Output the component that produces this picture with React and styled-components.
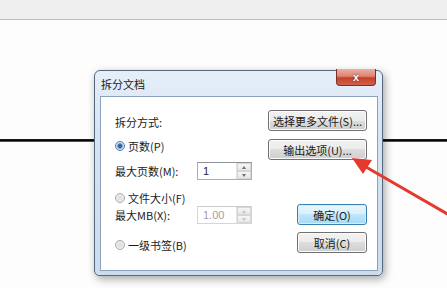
import React from "react";
import styled, { createGlobalStyle } from "styled-components";

const GlobalStyle = createGlobalStyle`
  html, body {
    margin: 0;
    padding: 0;
    background: #fff;
  }
  body {
    font-family: "Noto Sans CJK SC", "Liberation Sans", sans-serif;
  }
`;

const Page = styled.div`
  position: relative;
  width: 447px;
  height: 288px;
  overflow: hidden;
  background: #fdfdfd;
`;

const TopBar = styled.div`
  height: 19px;
  background: #efefef;
  border-bottom: 1px solid #bdbdbd;
`;

const Rule = styled.div`
  margin-top: 119px;
  height: 3px;
  background: linear-gradient(#2a2a2a, #000 45%, #111 65%, #8a8a8a);
`;

const Dialog = styled.div`
  position: absolute;
  left: 94px;
  top: 70px;
  width: 287px;
  height: 204px;
  border: 1px solid #56687c;
  border-radius: 6px 6px 5px 5px;
  background: linear-gradient(#e6eff9, #d6e4f3 30%, #cbdcef);
  box-shadow: 2px 3px 9px rgba(0, 0, 0, 0.35);
  display: flex;
  flex-direction: column;
  font-family: "Noto Sans CJK SC", "Liberation Sans", sans-serif;
  font-size: 11px;
  color: #1a1a1a;
`;

const TitleBar = styled.div`
  height: 25px;
  display: flex;
  justify-content: space-between;
  align-items: flex-start;
  padding: 0 6px 0 6px;
`;

const Title = styled.span`
  margin-top: 5px;
  color: #222;
`;

const CloseButton = styled.div`
  margin-top: -2px;
  width: 40px;
  height: 17px;
  box-sizing: border-box;
  border: 1px solid #7d2f25;
  border-top: none;
  border-radius: 0 0 4px 4px;
  background: linear-gradient(#eab0a4, #dd8470 45%, #c5412b 55%, #d0604a);
  display: flex;
  align-items: center;
  justify-content: center;
  color: #fff;
  font-family: "Liberation Sans", sans-serif;
  font-weight: bold;
  font-size: 11px;
  text-shadow: 0 0 2px #5a1a10;
`;

const Panel = styled.div`
  flex: 1;
  margin: 0 4px 4px 5px;
  border: 1px solid #8ba2bc;
  background: #fff;
  display: flex;
  justify-content: space-between;
  padding: 0 10px 0 14px;
`;

const LeftCol = styled.div`
  display: flex;
  flex-direction: column;
`;

const RightCol = styled.div`
  display: flex;
  flex-direction: column;
  align-items: flex-end;
  padding-top: 13px;
`;

const Row = styled.div`
  display: flex;
  align-items: center;
  height: ${(p) => p.$h || 16}px;
  margin-top: ${(p) => p.$mt || 0}px;
`;

const Label = styled.span`
  width: ${(p) => (p.$w ? p.$w + "px" : "auto")};
  white-space: nowrap;
`;

const RadioDot = styled.span`
  width: 10px;
  height: 10px;
  box-sizing: border-box;
  border-radius: 50%;
  margin-right: 3px;
  border: 1px solid ${(p) => (p.$on ? "#5a7fa5" : "#a9a9a9")};
  background: ${(p) =>
    p.$on
      ? "radial-gradient(circle, #1f4f86 0, #3f78ad 2px, #bcd3ea 3px, #e9f1f9 5px)"
      : "radial-gradient(circle, #dcdcdc 0, #e8e8e8 3px, #f7f7f7 5px)"};
`;

const Spin = styled.div`
  width: 55px;
  height: 18px;
  box-sizing: border-box;
  border: 1px solid ${(p) => (p.$disabled ? "#d3d6da" : "#abadb3")};
  border-top-color: ${(p) => (p.$disabled ? "#c8cbd0" : "#8e9196")};
  background: #fff;
  display: flex;
`;

const SpinValue = styled.span`
  flex: 1;
  padding-left: 5px;
  line-height: 16px;
  font-family: "Liberation Sans", sans-serif;
  color: ${(p) => (p.$disabled ? "#a0a0a0" : "#1e1e1e")};
`;

const SpinArrows = styled.div`
  width: 14px;
  display: flex;
  flex-direction: column;
  border-left: 1px solid #e2e2e2;
`;

const SpinArrow = styled.div`
  flex: 1;
  display: flex;
  align-items: center;
  justify-content: center;
  background: linear-gradient(#f6f6f6, #e6e6e6);
  border: 1px solid #d6d6d6;
  &::after {
    content: "";
    border-left: 2.5px solid transparent;
    border-right: 2.5px solid transparent;
    ${(p) =>
      p.$up
        ? `border-bottom: 3px solid ${p.$disabled ? "#c4c4c4" : "#707070"};`
        : `border-top: 3px solid ${p.$disabled ? "#c4c4c4" : "#707070"};`}
  }
`;

const Button = styled.div`
  width: ${(p) => p.$w}px;
  height: 21px;
  box-sizing: border-box;
  margin-top: ${(p) => p.$mt || 0}px;
  border: 1px solid ${(p) => (p.$default ? "#3c7fb1" : "#707070")};
  border-radius: 3px;
  background: ${(p) =>
    p.$default
      ? "linear-gradient(#eaf6fd, #d9f0fc 50%, #bee6fd 50%, #a7d9f5)"
      : "linear-gradient(#f2f2f2, #ebebeb 50%, #dddddd 50%, #cfcfcf)"};
  box-shadow: inset 0 0 0 1px ${(p) => (p.$default ? "#d2eefc" : "#fcfcfc")};
  display: flex;
  align-items: center;
  justify-content: center;
  white-space: nowrap;
`;

const Overlay = styled.svg`
  position: absolute;
  left: 0;
  top: 0;
  pointer-events: none;
`;

function SpinBox({ value, disabled }) {
  return (
    <Spin $disabled={disabled}>
      <SpinValue $disabled={disabled}>{value}</SpinValue>
      <SpinArrows>
        <SpinArrow $up $disabled={disabled} />
        <SpinArrow $disabled={disabled} />
      </SpinArrows>
    </Spin>
  );
}

export default function App() {
  return (
    <>
      <GlobalStyle />
      <Page>
        <TopBar />
        <Rule />
        <Dialog>
          <TitleBar>
            <Title>拆分文档</Title>
            <CloseButton>x</CloseButton>
          </TitleBar>
          <Panel>
            <LeftCol>
              <Row $mt={17}>
                <Label>拆分方式:</Label>
              </Row>
              <Row $mt={8}>
                <RadioDot $on />
                <Label>页数(P)</Label>
              </Row>
              <Row $mt={8} $h={18}>
                <Label $w={82}>最大页数(M):</Label>
                <SpinBox value="1" />
              </Row>
              <Row $mt={10}>
                <RadioDot />
                <Label>文件大小(F)</Label>
              </Row>
              <Row $mt={0} $h={18}>
                <Label $w={82}>最大MB(X):</Label>
                <SpinBox value="1.00" disabled />
              </Row>
              <Row $mt={13}>
                <RadioDot />
                <Label>一级书签(B)</Label>
              </Row>
            </LeftCol>
            <RightCol>
              <Button $w={99}>选择更多文件(S)...</Button>
              <Button $w={99} $mt={8}>输出选项(U)...</Button>
              <Button $w={70} $mt={44} $default>确定(O)</Button>
              <Button $w={70} $mt={7}>取消(C)</Button>
            </RightCol>
          </Panel>
        </Dialog>
        <Overlay width="447" height="288" viewBox="0 0 447 288">
          <line x1="449" y1="215" x2="366" y2="167" stroke="#e5392e" strokeWidth="3" />
          <polygon points="352,158 372,160 363,174" fill="#e5392e" />
        </Overlay>
      </Page>
    </>
  );
}
